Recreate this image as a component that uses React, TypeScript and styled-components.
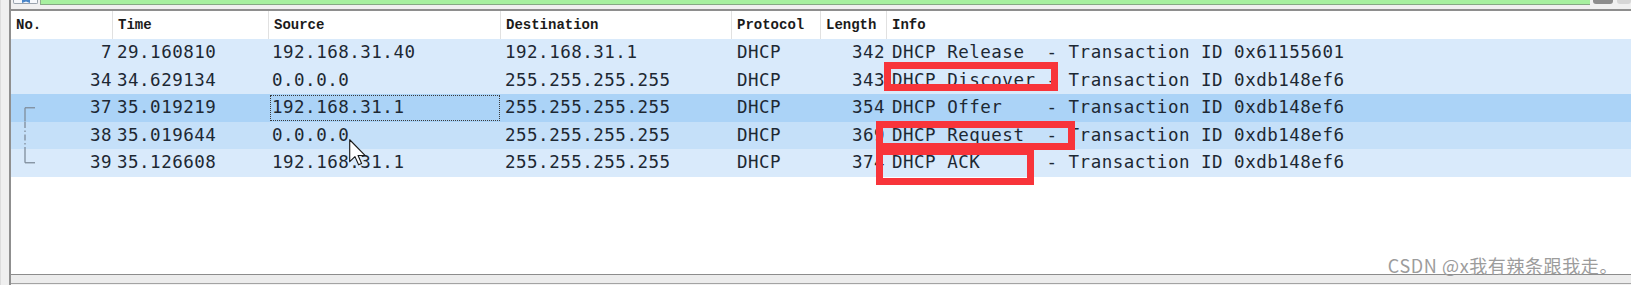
import React from 'react';
import styled, { createGlobalStyle } from 'styled-components';

const GlobalStyle = createGlobalStyle`
  html, body { margin: 0; padding: 0; }
  body {
    width: 1631px;
    height: 285px;
    overflow: hidden;
    background: #f0f0f0;
    font-family: "DejaVu Sans Mono", monospace;
  }
`;

const Window = styled.div`
  position: relative;
  display: flex;
  width: 1631px;
  height: 285px;
  background: #f0f0f0;
  overflow: hidden;
`;

const SideFrame = styled.div`
  flex: none;
  width: 11px;
  box-sizing: border-box;
  background: #efefef;
  border-left: 1px solid #dcdcdc;
  border-right: 2px solid #8f8f8f;
`;

const Main = styled.div`
  flex: 1;
  min-width: 0;
  display: flex;
  flex-direction: column;
`;

const FilterStrip = styled.div`
  flex: none;
  height: 9px;
  display: flex;
  align-items: flex-start;
  gap: 2px;
  padding-left: 2px;
  box-sizing: border-box;
`;

const BookmarkBox = styled.div`
  flex: none;
  width: 25px;
  height: 4px;
  box-sizing: border-box;
  background: #f6f8fb;
  border: 1px solid #9aa3ad;
  border-top: none;
  border-radius: 0 0 2px 2px;
  display: flex;
  justify-content: center;
  overflow: hidden;
`;

const FilterField = styled.div`
  flex: 1;
  height: 5px;
  box-sizing: border-box;
  background: #a7f0a0;
  border-bottom: 1px solid #86a884;
  border-left: 1px solid #8fb08c;
`;

const StripButton = styled.div<{ $w: number; $dark?: boolean }>`
  flex: none;
  width: ${(p) => p.$w}px;
  height: 4px;
  margin-left: ${(p) => (p.$dark ? 1 : 2)}px;
  background: ${(p) => (p.$dark ? '#8d8d8d' : '#d6d6d6')};
  border-radius: 0 0 3px 3px;
`;

const ListPane = styled.div`
  flex: 1;
  display: flex;
  flex-direction: column;
  background: #ffffff;
  border-top: 2px solid #8e8e8e;
  border-bottom: 1px solid #8c8c8c;
`;

const HeaderRow = styled.div`
  flex: none;
  display: flex;
  height: 28px;
  background: #ffffff;
`;

const HeaderCell = styled.div<{ $w?: number }>`
  ${(p) => (p.$w ? `width: ${p.$w}px; flex: none;` : 'flex: 1;')}
  box-sizing: border-box;
  padding-left: 5px;
  border-right: ${(p) => (p.$w ? '1px solid #e1e1e1' : 'none')};
  font-family: "Liberation Mono", monospace;
  font-weight: bold;
  font-size: 14px;
  line-height: 28px;
  color: #1b1b1b;
  white-space: pre;
`;

const Row = styled.div<{ $bg: string }>`
  flex: none;
  display: flex;
  height: 27.5px;
  background: ${(p) => p.$bg};
  font-family: "DejaVu Sans Mono", monospace;
  font-size: 17.5px;
  letter-spacing: 0.5px;
  line-height: 27.5px;
  color: #1d2833;
  white-space: pre;
`;

const Cell = styled.div<{ $w?: number; $right?: boolean; $pad?: number; $focus?: boolean }>`
  ${(p) => (p.$w ? `width: ${p.$w}px; flex: none;` : 'flex: 1;')}
  box-sizing: border-box;
  text-align: ${(p) => (p.$right ? 'right' : 'left')};
  padding-left: ${(p) => (p.$right ? 0 : p.$pad ?? 4)}px;
  padding-right: ${(p) => (p.$right ? p.$pad ?? 2 : 0)}px;
  outline: ${(p) => (p.$focus ? '1px dotted #3a3a3a' : 'none')};
  outline-offset: -2px;
  overflow: hidden;
`;

const NoCell = styled.div`
  width: 102px;
  flex: none;
  box-sizing: border-box;
  display: flex;
  align-items: stretch;
  padding-left: 13px;
  padding-right: 1px;
`;

const NoValue = styled.span`
  margin-left: auto;
`;

const Filler = styled.div`
  flex: 1;
  background: #ffffff;
`;

const BottomStrip = styled.div`
  flex: none;
  height: 10px;
  background: #ececec;
  box-shadow: inset 0 -1px 0 #f2f2f2, inset 0 -2px 0 #a3a3a3;
`;

const Annotation = styled.div`
  position: absolute;
  box-sizing: border-box;
  border: 7px solid #f8343a;
  pointer-events: none;
`;

const Watermark = styled.div`
  position: absolute;
  right: 13px;
  bottom: 11px;
  font-family: "Noto Sans CJK SC", "Liberation Sans", sans-serif;
  font-size: 18px;
  line-height: 18px;
  letter-spacing: 0.6px;
  color: #9c9c9c;
  white-space: nowrap;
`;

const CursorWrap = styled.div`
  position: absolute;
  left: 349px;
  top: 139px;
  width: 17px;
  height: 27px;
  pointer-events: none;
`;

type Link = 'first' | 'mid' | 'last' | undefined;

const LinkMark = ({ kind }: { kind: Link }) => {
  if (!kind) return null;
  const c = '#7f8d9b';
  const h = 27.5;
  const m = 13.75;
  return (
    <svg width={14} height={h} viewBox={`0 0 14 ${h}`} style={{ flex: 'none' }}>
      {kind === 'first' && (
        <>
          <line x1={1} y1={m} x2={11} y2={m} stroke={c} strokeWidth={1.3} />
          <line x1={1} y1={m} x2={1} y2={h} stroke={c} strokeWidth={1.3} />
        </>
      )}
      {kind === 'mid' && (
        <line x1={1} y1={0} x2={1} y2={h} stroke={c} strokeWidth={1.3} strokeDasharray="6 2.5 1.5 2.5" />
      )}
      {kind === 'last' && (
        <>
          <line x1={1} y1={0} x2={1} y2={m} stroke={c} strokeWidth={1.3} />
          <line x1={1} y1={m} x2={11} y2={m} stroke={c} strokeWidth={1.3} />
        </>
      )}
    </svg>
  );
};

const COLS = { no: 102, time: 156, src: 232, dst: 231, proto: 89, len: 66 };

type Pkt = {
  no: number;
  time: string;
  src: string;
  dst: string;
  len: number;
  info: string;
  bg: string;
  link?: Link;
  focus?: boolean;
};

const NORMAL = '#d9eafb';
const packets: Pkt[] = [
  { no: 7, time: '29.160810', src: '192.168.31.40', dst: '192.168.31.1', len: 342, info: 'DHCP Release  - Transaction ID 0x61155601', bg: NORMAL },
  { no: 34, time: '34.629134', src: '0.0.0.0', dst: '255.255.255.255', len: 343, info: 'DHCP Discover - Transaction ID 0xdb148ef6', bg: NORMAL },
  { no: 37, time: '35.019219', src: '192.168.31.1', dst: '255.255.255.255', len: 354, info: 'DHCP Offer    - Transaction ID 0xdb148ef6', bg: '#abd3f7', link: 'first', focus: true },
  { no: 38, time: '35.019644', src: '0.0.0.0', dst: '255.255.255.255', len: 369, info: 'DHCP Request  - Transaction ID 0xdb148ef6', bg: '#c5e0f9', link: 'mid' },
  { no: 39, time: '35.126608', src: '192.168.31.1', dst: '255.255.255.255', len: 374, info: 'DHCP ACK      - Transaction ID 0xdb148ef6', bg: NORMAL, link: 'last' },
];

const boxes = [
  { left: 884, top: 62, width: 174, height: 29 },
  { left: 876, top: 121, width: 199, height: 29 },
  { left: 876, top: 148, width: 158, height: 37 },
];

export default function App() {
  return (
    <>
      <GlobalStyle />
      <Window>
        <SideFrame />
        <Main>
          <FilterStrip>
            <BookmarkBox>
              <svg width={10} height={3} viewBox="0 0 10 3">
                <path d="M1 0 L1 3 L5 1.5 L9 3 L9 0 Z" fill="#4a86c8" />
              </svg>
            </BookmarkBox>
            <FilterField />
            <StripButton $w={20} $dark />
            <StripButton $w={14} />
          </FilterStrip>
          <ListPane>
            <HeaderRow>
              <HeaderCell $w={COLS.no}>No.</HeaderCell>
              <HeaderCell $w={COLS.time}>Time</HeaderCell>
              <HeaderCell $w={COLS.src}>Source</HeaderCell>
              <HeaderCell $w={COLS.dst}>Destination</HeaderCell>
              <HeaderCell $w={COLS.proto}>Protocol</HeaderCell>
              <HeaderCell $w={COLS.len}>Length</HeaderCell>
              <HeaderCell>Info</HeaderCell>
            </HeaderRow>
            {packets.map((p) => (
              <Row key={p.no} $bg={p.bg}>
                <NoCell>
                  <LinkMark kind={p.link} />
                  <NoValue>{p.no}</NoValue>
                </NoCell>
                <Cell $w={COLS.time} $pad={4}>{p.time}</Cell>
                <Cell $w={COLS.src} $pad={3} $focus={p.focus}>{p.src}</Cell>
                <Cell $w={COLS.dst} $pad={4}>{p.dst}</Cell>
                <Cell $w={COLS.proto} $pad={5}>DHCP</Cell>
                <Cell $w={COLS.len} $right $pad={2}>{p.len}</Cell>
                <Cell $pad={5}>{p.info}</Cell>
              </Row>
            ))}
            <Filler />
          </ListPane>
          <BottomStrip />
        </Main>
        {boxes.map((b, i) => (
          <Annotation key={i} style={{ left: b.left, top: b.top, width: b.width, height: b.height }} />
        ))}
        <CursorWrap>
          <svg width={17} height={27} viewBox="0 0 12 19">
            <path
              d="M0.5 0.5 L0.5 16 L4.2 12.4 L6.8 18.2 L8.9 17.3 L6.4 11.6 L11.3 11.6 Z"
              fill="#ffffff"
              stroke="#1a1a1a"
              strokeWidth={0.8}
              strokeLinejoin="round"
            />
          </svg>
        </CursorWrap>
        <Watermark>CSDN @x我有辣条跟我走。</Watermark>
      </Window>
    </>
  );
}
